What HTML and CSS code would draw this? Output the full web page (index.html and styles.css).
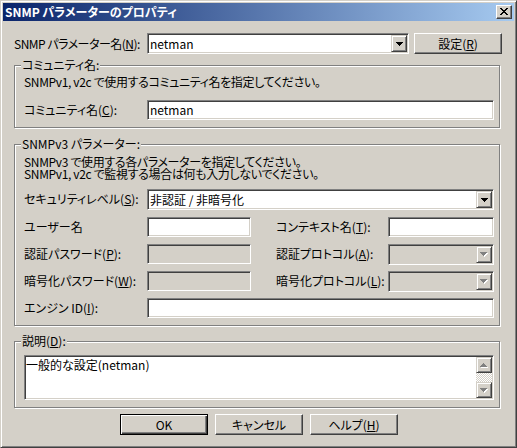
FILE: index.html
```html
<!DOCTYPE html>
<html lang="ja">
<head>
<meta charset="utf-8">
<title>SNMP パラメーターのプロパティ</title>
<link rel="stylesheet" href="styles.css">
</head>
<body>
<div class="window">
  <div class="titlebar">
    <span class="title">SNMP パラメーターのプロパティ</span>
    <span class="close"><svg width="8" height="7" viewBox="0 0 8 7"><path d="M0 0h2v1H0zM6 0h2v1H6zM1 1h2v1H1zM5 1h2v1H5zM2 2h4v1H2zM3 3h2v1H3zM2 4h4v1H2zM1 5h2v1H1zM5 5h2v1H5zM0 6h2v1H0zM6 6h2v1H6z"/></svg></span>
  </div>
  <div class="client">
    <div class="toprow">
      <span class="toplabel">SNMP パラメーター名(<u>N</u>):</span>
      <div class="field combo combo-top">
        <span class="val">netman</span>
        <span class="ddbtn"><svg width="7" height="4" viewBox="0 0 7 4"><path d="M0 0h7v1H0zM1 1h5v1H1zM2 2h3v1H2zM3 3h1v1H3z"/></svg></span>
      </div>
      <button class="btn btn-set">設定(<u>R</u>)</button>
    </div>

    <div class="group g-comm">
      <span class="legend">コミュニティ名:</span>
      <p class="desc">SNMPv1, v2c で使用するコミュニティ名を指定してください。</p>
      <div class="row row-comm">
        <span class="lbl">コミュニティ名(<u>C</u>):</span>
        <div class="field in-full"><span class="val">netman</span></div>
      </div>
    </div>

    <div class="group g-v3">
      <span class="legend">SNMPv3 パラメーター:</span>
      <div class="desc desc2">
        <span class="dline">SNMPv3 で使用する各パラメーターを指定してください。</span>
        <span class="dline">SNMPv1, v2c で監視する場合は何も入力しないでください。</span>
      </div>
      <div class="row row-sec">
        <span class="lbl">セキュリティレベル(<u>S</u>):</span>
        <div class="field combo in-full combo-tall">
          <span class="val">非認証 / 非暗号化</span>
          <span class="ddbtn"><svg width="7" height="4" viewBox="0 0 7 4"><path d="M0 0h7v1H0zM1 1h5v1H1zM2 2h3v1H2zM3 3h1v1H3z"/></svg></span>
        </div>
      </div>
      <div class="row">
        <span class="lbl">ユーザー名</span>
        <div class="field in-short"></div>
        <span class="lbl2">コンテキスト名(<u>T</u>):</span>
        <div class="field in-short2"></div>
      </div>
      <div class="row">
        <span class="lbl">認証パスワード(<u>P</u>):</span>
        <div class="field disabled in-short"></div>
        <span class="lbl2">認証プロトコル(<u>A</u>):</span>
        <div class="field combo disabled in-short2 combo-tall">
          <span class="val"></span>
          <span class="ddbtn"><svg width="8" height="5" viewBox="0 0 8 5"><path fill="#fff" d="M1 1h7v1H1zM2 2h5v1H2zM3 3h3v1H3zM4 4h1v1H4z"/><path fill="#808080" d="M0 0h7v1H0zM1 1h5v1H1zM2 2h3v1H2zM3 3h1v1H3z"/></svg></span>
        </div>
      </div>
      <div class="row">
        <span class="lbl">暗号化パスワード(<u>W</u>):</span>
        <div class="field disabled in-short"></div>
        <span class="lbl2">暗号化プロトコル(<u>L</u>):</span>
        <div class="field combo disabled in-short2 combo-tall">
          <span class="val"></span>
          <span class="ddbtn"><svg width="8" height="5" viewBox="0 0 8 5"><path fill="#fff" d="M1 1h7v1H1zM2 2h5v1H2zM3 3h3v1H3zM4 4h1v1H4z"/><path fill="#808080" d="M0 0h7v1H0zM1 1h5v1H1zM2 2h3v1H2zM3 3h1v1H3z"/></svg></span>
        </div>
      </div>
      <div class="row">
        <span class="lbl">エンジン ID(<u>I</u>):</span>
        <div class="field in-full"></div>
      </div>
    </div>

    <div class="group g-desc">
      <span class="legend">説明(<u>D</u>):</span>
      <div class="memo">
        <div class="memo-text">一般的な設定(netman)</div>
        <div class="vscroll">
          <span class="sbbtn"><svg width="8" height="5" viewBox="0 0 8 5"><path fill="#fff" d="M4 1h1v1H4zM3 2h3v1H3zM2 3h5v1H2zM1 4h7v1H1z"/><path fill="#808080" d="M3 0h1v1H3zM2 1h3v1H2zM1 2h5v1H1zM0 3h7v1H0z"/></svg></span>
          <span class="sbtrack"></span>
          <span class="sbbtn"><svg width="8" height="5" viewBox="0 0 8 5"><path fill="#fff" d="M1 1h7v1H1zM2 2h5v1H2zM3 3h3v1H3zM4 4h1v1H4z"/><path fill="#808080" d="M0 0h7v1H0zM1 1h5v1H1zM2 2h3v1H2zM3 3h1v1H3z"/></svg></span>
        </div>
      </div>
    </div>

    <div class="buttons">
      <button class="btn default">OK</button>
      <button class="btn">キャンセル</button>
      <button class="btn">ヘルプ(<u>H</u>)</button>
    </div>
  </div>
</div>
</body>
</html>
```

FILE: styles.css
```css
* { box-sizing: border-box; }
html, body { margin: 0; padding: 0; }
body {
  width: 517px;
  height: 448px;
  overflow: hidden;
  background: #d4d0c8;
  font-family: "Noto Sans CJK JP", "Noto Sans", sans-serif;
  font-size: 12px;
  line-height: 12px;
  color: #000;
  font-feature-settings: "palt" 1;
}
u { text-decoration: underline; text-underline-offset: 1px; }
svg { display: block; shape-rendering: crispEdges; }

.window {
  width: 517px;
  height: 448px;
  background: #d4d0c8;
  border: 1px solid;
  border-color: #d4d0c8 #404040 #404040 #d4d0c8;
  box-shadow: inset 1px 1px 0 #fff, inset -1px -1px 0 #808080;
  padding: 2px;
  display: flex;
  flex-direction: column;
}

.titlebar {
  flex: none;
  height: 18px;
  background: linear-gradient(to right, #0a246a, #a6caf0);
  display: flex;
  align-items: center;
  justify-content: space-between;
  padding: 0 2px 0 2px;
}
.title {
  color: #fff;
  font-weight: bold;
  font-size: 12px;
  line-height: 14px;
  white-space: nowrap;
}
.close {
  width: 16px;
  height: 14px;
  background: #d4d0c8;
  border: 1px solid;
  border-color: #fff #404040 #404040 #fff;
  box-shadow: inset -1px -1px 0 #808080;
  display: flex;
  padding: 2px 0 0 3px;
}

.client {
  padding: 12px 0 0 11px;
}

.toprow {
  display: flex;
  align-items: center;
  height: 21px;
}
.toplabel {
  width: 133px;
  flex: none;
  white-space: nowrap;
  letter-spacing: -0.5px;
}

.field {
  height: 20px;
  background: #fff;
  border: 1px solid;
  border-color: #808080 #fff #fff #808080;
  box-shadow: inset 1px 1px 0 #404040, inset -1px -1px 0 #d4d0c8;
  padding: 0 2px;
  display: flex;
  align-items: center;
  flex: none;
}
.field.disabled { background: #d4d0c8; }
.field .val { flex: 1; white-space: nowrap; }

.combo { padding: 0 1px 0 2px; }
.combo-top { width: 262px; height: 21px; }
.combo-tall { height: 21px; }

.ddbtn {
  width: 16px;
  height: 17px;
  flex: none;
  background: #d4d0c8;
  border: 1px solid;
  border-color: #d4d0c8 #404040 #404040 #d4d0c8;
  box-shadow: inset 1px 1px 0 #fff, inset -1px -1px 0 #808080;
  display: flex;
  align-items: center;
  justify-content: center;
}

.btn {
  font: inherit;
  font-feature-settings: "palt" 1;
  line-height: 12px;
  color: #000;
  width: 88px;
  height: 21px;
  flex: none;
  margin: 0;
  padding: 0;
  background: #d4d0c8;
  border: 1px solid;
  border-color: #fff #404040 #404040 #fff;
  box-shadow: inset -1px -1px 0 #808080;
  display: flex;
  align-items: center;
  justify-content: center;
}
.btn.default {
  border-color: #000;
  box-shadow: inset 1px 1px 0 #fff, inset -1px -1px 0 #404040, inset -2px -2px 0 #808080;
}
.btn-set { margin-left: 5px; }

.group {
  position: relative;
  width: 486px;
  border: 1px solid #808080;
  box-shadow: inset 1px 1px 0 #fff, 1px 1px 0 #fff;
  padding: 0 5px 7px 9px;
}
.legend {
  position: absolute;
  top: -7px;
  left: 6px;
  padding: 0 1px;
  background: #d4d0c8;
  line-height: 12px;
  white-space: nowrap;
}
.desc {
  margin: 0;
  line-height: 12px;
  white-space: nowrap;
  letter-spacing: -0.35px;
}
.desc2 {
  display: flex;
  flex-direction: column;
}
.dline {
  display: block;
  height: 12px;
  line-height: 12px;
}

.g-comm { margin-top: 11px; padding-top: 10px; }
.g-comm .row-comm { margin-top: 12px; }

.g-v3 { margin-top: 16px; padding-top: 11px; }
.g-v3 .row-sec { margin-top: 9px; height: 21px; }

.g-desc { margin-top: 15px; padding-top: 13px; }

.row {
  display: flex;
  align-items: flex-start;
  height: 20px;
  margin-top: 7px;
}
.row .lbl {
  width: 123px;
  flex: none;
  line-height: 20px;
  white-space: nowrap;
}
.row .lbl2 {
  width: 112px;
  margin-left: 25px;
  flex: none;
  line-height: 20px;
  white-space: nowrap;
}
.in-full { width: 347px; }
.in-short { width: 104px; }
.in-short2 { width: 106px; }

.memo {
  width: 470px;
  height: 45px;
  background: #fff;
  border: 1px solid;
  border-color: #808080 #fff #fff #808080;
  box-shadow: inset 1px 1px 0 #404040, inset -1px -1px 0 #d4d0c8;
  display: flex;
}
.memo-text {
  flex: 1;
  padding: 3px 0 0 1px;
  line-height: 12px;
}
.vscroll {
  width: 16px;
  flex: none;
  margin: 1px 1px 1px 0;
  display: flex;
  flex-direction: column;
}
.sbbtn {
  height: 16px;
  flex: none;
  background: #d4d0c8;
  border: 1px solid;
  border-color: #d4d0c8 #404040 #404040 #d4d0c8;
  box-shadow: inset 1px 1px 0 #fff, inset -1px -1px 0 #808080;
  display: flex;
  align-items: center;
  justify-content: center;
}
.sbtrack {
  flex: 1;
  background-color: #d4d0c8;
  background-image: conic-gradient(#fff 25%, #d4d0c8 0 50%, #fff 0 75%, #d4d0c8 0);
  background-size: 2px 2px;
}

.buttons {
  display: flex;
  gap: 7px;
  margin-top: 6px;
  padding-left: 106px;
}
```
